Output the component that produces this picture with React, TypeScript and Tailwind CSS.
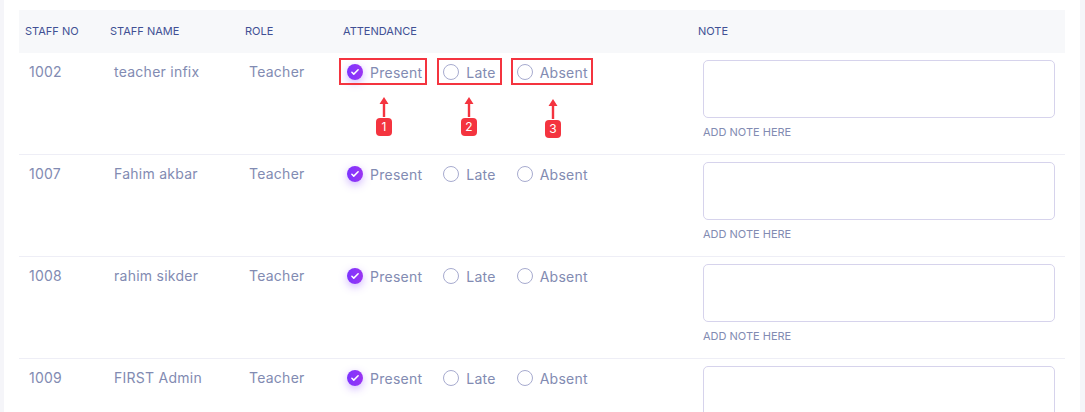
import React from 'react';

type Staff = { no: string; name: string };

const staff: Staff[] = [
  { no: '1002', name: 'teacher infix' },
  { no: '1007', name: 'Fahim akbar' },
  { no: '1008', name: 'rahim sikder' },
  { no: '1009', name: 'FIRST Admin' },
];

const cols = 'grid grid-cols-[85px_135px_98px_355px_1fr]';

const Radio: React.FC<{ label: string; checked?: boolean }> = ({ label, checked }) => (
  <div className="flex items-center gap-[7px]">
    {checked ? (
      <span className="flex h-4 w-4 items-center justify-center rounded-full bg-gradient-to-r from-[#7c32ff] to-[#9a34f2] shadow-[0_3px_8px_rgba(124,50,255,0.35)]">
        <svg viewBox="0 0 16 16" className="h-[10px] w-[10px]" fill="none">
          <path d="M3 8.4l3 3 7-7" stroke="#fff" strokeWidth="2.4" strokeLinecap="round" strokeLinejoin="round" />
        </svg>
      </span>
    ) : (
      <span className="h-4 w-4 rounded-full border border-[#a7abcf]" />
    )}
    <span>{label}</span>
  </div>
);

const Marker: React.FC<{ n: number; left: number; top: number }> = ({ n, left, top }) => (
  <div className="absolute flex flex-col items-center" style={{ left, top }}>
    <svg width="10" height="20" viewBox="0 0 10 20">
      <path d="M5 0L9.5 7H6.2V20H3.8V7H0.5Z" fill="#f4343f" />
    </svg>
    <span className="mt-[1px] flex h-[18px] w-[16px] items-center justify-center rounded-[4px] bg-[#f4343f] text-[12px] leading-none text-white">
      {n}
    </span>
  </div>
);

const App: React.FC = () => {
  return (
    <div className="flex h-[412px] w-full overflow-hidden bg-[#f5f5f9] font-['Inter',sans-serif] text-[#828bb2]">
      <div className="ml-[4px] mr-[5px] flex-1 bg-white px-[15px] pt-[10px]">
        <div className={`${cols} h-[43px] items-center bg-[#f7f8fa] text-[11px] uppercase text-[#415094]`}>
          <div className="pl-[6px]">Staff No</div>
          <div className="pl-[6px]">Staff Name</div>
          <div className="pl-[6px]">Role</div>
          <div className="pl-[6px]">Attendance</div>
          <div className="pl-[6px]">Note</div>
        </div>

        {staff.map((s, i) => (
          <div key={s.no} className={`${cols} h-[102px] border-b border-[#eeeef6] text-[14px] tracking-[0.25px]`}>
            <div className="pl-[10px] pt-[7px] leading-[24px]">{s.no}</div>
            <div className="pl-[10px] pt-[7px] leading-[24px]">{s.name}</div>
            <div className="pl-[10px] pt-[7px] leading-[24px]">Teacher</div>
            <div className="relative pl-[10px] pt-[7px]">
              <div className="flex h-[24px] items-center gap-[21px]">
                <Radio label="Present" checked />
                <Radio label="Late" />
                <Radio label="Absent" />
              </div>
              {i === 0 && (
                <>
                  <div className="absolute left-[2px] top-[5px] h-[27px] w-[88px] border-2 border-[#f4343f]" />
                  <div className="absolute left-[100px] top-[5px] h-[27px] w-[65px] border-2 border-[#f4343f]" />
                  <div className="absolute left-[174px] top-[5px] h-[27px] w-[82px] border-2 border-[#f4343f]" />
                  <Marker n={1} left={39} top={44} />
                  <Marker n={2} left={124} top={44} />
                  <Marker n={3} left={208} top={46} />
                </>
              )}
            </div>
            <div className="pl-[11px] pr-[10px] pt-[7px]">
              <div className="h-[58px] w-full rounded-[5px] border border-[#d6d3ec]" />
              <div className="mt-[7px] text-[11px] uppercase leading-[14px] tracking-normal">Add note here</div>
            </div>
          </div>
        ))}
      </div>
    </div>
  );
};

export default App;
